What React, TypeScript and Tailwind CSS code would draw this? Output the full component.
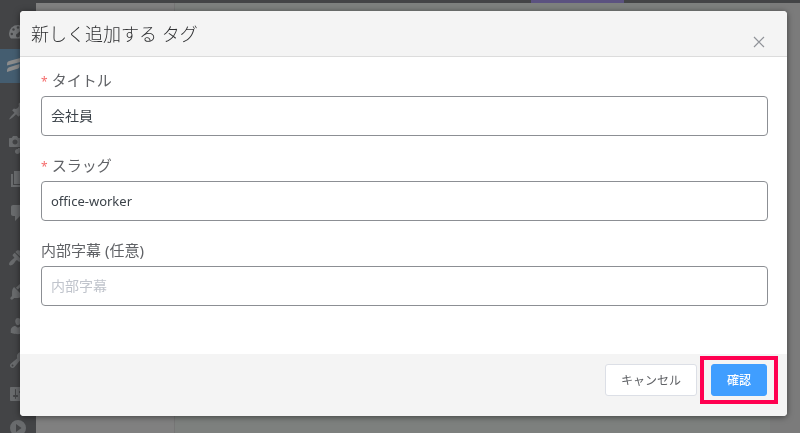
import { useState } from "react";
import type { ReactNode } from "react";

// 20x20 admin menu glyphs
const icons = {
  post: "M10.44 3.02l1.82-1.82 6.36 6.35-1.83 1.82c-1.05-.68-2.48-.57-3.41.36l-.75.75c-.92.93-1.04 2.35-.35 3.41l-1.83 1.82-2.41-2.41-2.8 2.79c-.42.42-3.38 2.71-3.8 2.29s1.86-3.39 2.28-3.81l2.79-2.79L4.1 9.36l1.83-1.82c1.05.69 2.48.57 3.4-.36l.75-.75c.93-.92 1.05-2.35.36-3.41z",
  media:
    "M13 11V4c0-.55-.45-1-1-1h-1.67L9 1H5L3.67 3H2c-.55 0-1 .45-1 1v7c0 .55.45 1 1 1h10c.55 0 1-.45 1-1zM7 4.5c1.38 0 2.5 1.12 2.5 2.5S8.38 9.5 7 9.5 4.5 8.38 4.5 7 5.62 4.5 7 4.5zM14 6h5v10.5c0 1.38-1.12 2.5-2.5 2.5S14 17.88 14 16.5s1.12-2.5 2.5-2.5c.17 0 .34.02.5.05V9h-3V6zm-4 8.05V13h2v3.5c0 1.38-1.12 2.5-2.5 2.5S7 17.88 7 16.5 8.12 14 9.5 14c.17 0 .34.02.5.05z",
  page: "M6 15V2h10v13H6zm-1 1h8v2H3V5h2v11z",
  comments:
    "M5 2h9c1.1 0 2 .9 2 2v7c0 1.1-.9 2-2 2h-2l-5 5v-5H5c-1.1 0-2-.9-2-2V4c0-1.1.9-2 2-2z",
  appearance:
    "M14.48 11.06L7.41 3.99l1.5-1.5c.5-.56 2.3-.47 3.51.32 1.21.8 1.43 1.28 2.91 2.1 1.18.64 2.45 1.26 4.45.85zm-.71.71L6.7 4.7 4.93 6.47c-.39.39-.39 1.02 0 1.41l1.06 1.06c.39.39.39 1.03 0 1.42-.6.6-1.43 1.11-2.21 1.69-.35.26-.7.53-1.01.84C1.43 14.23.4 16.08 1.4 17.07c.99 1 2.84-.03 4.18-1.36.31-.31.58-.66.85-1.02.57-.78 1.08-1.61 1.69-2.21.39-.39 1.02-.39 1.41 0l1.06 1.06c.39.39 1.02.39 1.41 0z",
  plugins:
    "M13.11 4.36L9.87 7.6 8 5.73l3.24-3.24c.35-.34 1.05-.2 1.56.32.52.51.66 1.21.31 1.55zm-8 1.77l.91-1.12 9.01 9.01-1.19.84c-.71.71-2.63 1.16-3.82 1.16H6.14L4.9 17.26c-.59.59-1.54.59-2.12 0-.59-.58-.59-1.53 0-2.12l1.24-1.24v-3.88c0-1.13.4-3.19 1.09-3.89zm7.26 3.97l3.24-3.24c.34-.35 1.04-.21 1.55.31.52.51.66 1.21.31 1.55l-3.24 3.25z",
  users:
    "M10 9.25c-2.27 0-2.73-3.44-2.73-3.44C7 4.02 7.82 2 9.97 2c2.16 0 2.98 2.02 2.71 3.81 0 0-.41 3.44-2.68 3.44zm0 2.57L12.72 10c2.39 0 4.52 2.33 4.52 4.53v2.49s-3.65 1.13-7.24 1.13c-3.65 0-7.24-1.13-7.24-1.13v-2.49c0-2.25 1.94-4.48 4.47-4.48z",
  tools:
    "M16.68 9.77c-1.34 1.34-3.3 1.67-4.95.99l-5.41 6.52c-.99.99-2.59.99-3.58 0s-.99-2.59 0-3.57l6.52-5.42c-.68-1.65-.35-3.61.99-4.95 1.28-1.28 3.12-1.62 4.72-1.06l-2.89 2.89 2.82 2.82 2.86-2.87c.53 1.58.18 3.39-1.08 4.65zM3.81 16.21c.4.39 1.04.39 1.43 0 .4-.4.4-1.04 0-1.43-.39-.4-1.03-.4-1.43 0-.39.39-.39 1.03 0 1.43z",
  settings:
    "M18 16V4c0-.55-.45-1-1-1H3c-.55 0-1 .45-1 1v12c0 .55.45 1 1 1h14c.55 0 1-.45 1-1zM8 11h1c.55 0 1 .45 1 1s-.45 1-1 1H8v1.5c0 .28-.22.5-.5.5s-.5-.22-.5-.5V13H6c-.55 0-1-.45-1-1s.45-1 1-1h1V5.5c0-.28.22-.5.5-.5s.5.22.5.5V11zm5-2h-1c-.55 0-1-.45-1-1s.45-1 1-1h1V5.5c0-.28.22-.5.5-.5s.5.22.5.5V7h1c.55 0 1 .45 1 1s-.45 1-1 1h-1v5.5c0 .28-.22.5-.5.5s-.5-.22-.5-.5V9z",
};

function MenuIcon({ d }: { d: string }) {
  return (
    <svg viewBox="0 0 20 20" className="size-5" fill="currentColor">
      <path d={d} fillRule="evenodd" />
    </svg>
  );
}

function MenuItem({ label, active, children }: { label: string; active?: boolean; children: ReactNode }) {
  return (
    <a
      href="#"
      aria-label={label}
      className={
        active
          ? "flex h-[34px] items-center justify-center bg-[#445d70] text-[#8c8c8c]"
          : "flex h-[34px] items-center justify-center text-[#696b6d]"
      }
    >
      {children}
    </a>
  );
}

function Sidebar() {
  return (
    <nav className="flex w-9 shrink-0 flex-col gap-[11px] bg-[#434446] pt-3">
      <div>
        <MenuItem label="ダッシュボード">
          <svg viewBox="0 0 20 20" className="size-5">
            <path
              d="M3 16.500C1.700 15.200 1 13.400 1 11.500a9 8.500 0 0 1 18 0c0 1.900-.7 3.700-2 5z"
              fill="#737577"
            />
            <g fill="#434446">
              <circle cx="10" cy="5.500" r="1.200" />
              <circle cx="5.500" cy="7.500" r="1.200" />
              <circle cx="3.800" cy="12" r="1.200" />
              <circle cx="16.200" cy="12" r="1.200" />
              <path d="M14.500 7l-2.800 6.200a1.900 1.900 0 1 1-2.500-1.500z" />
            </g>
          </svg>
        </MenuItem>
        <MenuItem label="フォーム" active>
          <svg viewBox="0 0 20 20" className="size-5 overflow-visible" fill="currentColor">
            <path d="M-1 9.500V8c0-2 1-2.700 3-3.200L20 0v2c0 1.500-1 2.300-3 2.800z" />
            <path d="M-1 16v-1.500c0-2 1-3 3-3.500L11.500 8v2c0 1.700-1 2.600-3 3.100z" />
          </svg>
        </MenuItem>
      </div>
      <div>
        <MenuItem label="投稿">
          <MenuIcon d={icons.post} />
        </MenuItem>
        <MenuItem label="メディア">
          <MenuIcon d={icons.media} />
        </MenuItem>
        <MenuItem label="固定ページ">
          <MenuIcon d={icons.page} />
        </MenuItem>
        <MenuItem label="コメント">
          <MenuIcon d={icons.comments} />
        </MenuItem>
      </div>
      <div>
        <MenuItem label="外観">
          <MenuIcon d={icons.appearance} />
        </MenuItem>
        <MenuItem label="プラグイン">
          <MenuIcon d={icons.plugins} />
        </MenuItem>
        <MenuItem label="ユーザー">
          <MenuIcon d={icons.users} />
        </MenuItem>
        <MenuItem label="ツール">
          <MenuIcon d={icons.tools} />
        </MenuItem>
        <MenuItem label="設定">
          <MenuIcon d={icons.settings} />
        </MenuItem>
        <MenuItem label="メニューを閉じる">
          <MenuIcon d="M10 2a8 8 0 1 0 0 16a8 8 0 0 0 0-16zM8 6l5.500 4L8 14z" />
        </MenuItem>
      </div>
    </nav>
  );
}

// Dimmed admin screen behind the dialog
function Backdrop() {
  return (
    <div className="flex h-screen flex-col overflow-hidden">
      <div className="grid h-[3px] shrink-0 grid-cols-[531fr_93fr_176fr] bg-[#434446]">
        <div className="col-start-2 bg-[#5b5280]" />
      </div>
      <div className="flex flex-1">
        <Sidebar />
        <div className="w-[139px] border-r border-[#767676] bg-[#808080]" />
        <div className="flex-1 bg-[#7d807e]" />
        <div className="w-[30px] bg-[#7b7b7b]" />
      </div>
    </div>
  );
}

type FieldProps = {
  id: string;
  label: string;
  value: string;
  onChange: (value: string) => void;
  required?: boolean;
  placeholder?: string;
  latin?: boolean;
};

function Field({ id, label, value, onChange, required, placeholder, latin }: FieldProps) {
  return (
    <div className="flex flex-col">
      <label htmlFor={id} className="text-[15px] leading-8 text-[#606266]">
        {required && <span className="mr-1 text-xs text-[#f56c6c]">*</span>}
        {label}
      </label>
      <input
        id={id}
        type="text"
        value={value}
        placeholder={placeholder}
        onChange={(e) => onChange(e.target.value)}
        className={`h-10 w-full rounded border border-[#8c8f94] bg-white px-[9px] text-[#3c434a] outline-none placeholder:text-[#c0c4cc] ${
          latin ? "text-[13px]" : "pb-[2px] text-sm"
        }`}
      />
    </div>
  );
}

export default function App() {
  const [title, setTitle] = useState("会社員");
  const [slug, setSlug] = useState("office-worker");
  const [subtitle, setSubtitle] = useState("");

  return (
    <div className="font-['Noto_Sans','Noto_Sans_CJK_JP',sans-serif]">
      <Backdrop />

      <div className="fixed inset-0 overflow-hidden pt-[11px] pr-[13px] pl-5">
        <form
          role="dialog"
          aria-labelledby="dialog-title"
          onSubmit={(e) => e.preventDefault()}
          className="overflow-hidden rounded bg-white shadow-[0_1px_6px_rgba(0,0,0,0.5)]"
        >
          <header className="flex h-[46px] items-center justify-between border-b border-[#dcdcdc] bg-[#f4f4f4] pr-[22px] pl-[11px]">
            <h2 id="dialog-title" className="text-lg font-light text-[#303133]">
              新しく追加する タグ
            </h2>
            <button type="button" aria-label="閉じる" className="mt-4 text-[#909399]">
              <svg viewBox="0 0 12 12" className="size-3" fill="none" stroke="currentColor" strokeWidth="1.200">
                <path d="M1 1l10 10M11 1L1 11" />
              </svg>
            </button>
          </header>

          <div className="flex flex-col gap-[13px] pt-[7px] pr-[19px] pb-12 pl-[21px]">
            <Field id="title" label="タイトル" value={title} onChange={setTitle} required />
            <Field id="slug" label="スラッグ" value={slug} onChange={setSlug} required latin />
            <Field
              id="subtitle"
              label="内部字幕 (任意)"
              value={subtitle}
              onChange={setSubtitle}
              placeholder="内部字幕"
            />
          </div>

          <footer className="flex justify-end gap-[14px] bg-[#f4f4f4] px-5 pt-[10px] pb-5">
            <button
              type="button"
              className="h-8 rounded-[3px] border border-[#dcdfe6] bg-white px-[15px] pt-[2px] text-xs text-[#606266]"
            >
              キャンセル
            </button>
            <div className="relative flex">
              <button
                type="submit"
                className="h-8 rounded-[3px] border border-[#409eff] bg-[#409eff] px-[15px] pt-[2px] text-xs font-medium text-white"
              >
                確認
              </button>
              <span className="pointer-events-none absolute -inset-x-[11px] -inset-y-2 border-4 border-[#ff0050]" />
            </div>
          </footer>
        </form>
      </div>
    </div>
  );
}
